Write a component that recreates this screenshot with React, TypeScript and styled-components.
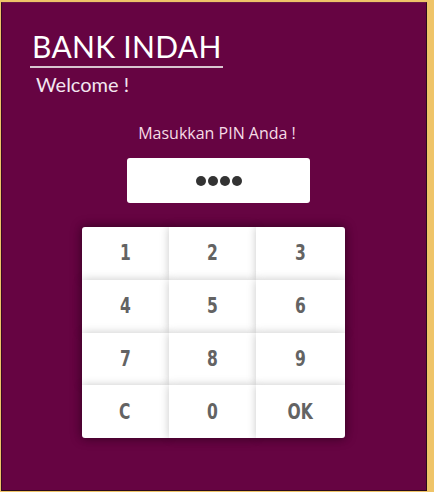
import React, { useState } from "react";
import styled, { createGlobalStyle } from "styled-components";

const Global = createGlobalStyle`
  html, body { margin: 0; padding: 0; background: #efc468; }
  * { box-sizing: border-box; }
`;

const Page = styled.div`
  padding: 2px 0 0 1px;
  width: 434px;
  height: 492px;
`;

const Panel = styled.div`
  width: 426px;
  height: 489px;
  background: #660442;
  border: 1px solid #2a0a1c;
  border-top-color: #6a1a48;
  border-left-color: #3a0a26;
  display: flex;
  flex-direction: column;
`;

const Header = styled.div`
  padding: 26px 0 0 28px;
  display: flex;
  flex-direction: column;
  align-items: flex-start;
`;

const Title = styled.h1`
  margin: 0;
  font-family: "Lato", "DejaVu Sans", sans-serif;
  font-weight: 400;
  font-size: 30px;
  line-height: 34px;
  letter-spacing: 0.3px;
  color: #ffffff;
  padding: 0 1px 3px 2px;
  border-bottom: 2px solid #d9c6d0;
`;

const Welcome = styled.div`
  margin: 4px 0 0 6px;
  font-family: "Lato", "DejaVu Sans", sans-serif;
  font-size: 20px;
  line-height: 24px;
  color: #f3e6f0;
`;

const Body = styled.div`
  display: flex;
  flex-direction: column;
  align-items: center;
  padding-top: 26px;
`;

const Prompt = styled.div`
  font-family: "Open Sans", "Noto Sans", sans-serif;
  font-size: 16px;
  line-height: 22px;
  color: #f6dbe6;
  margin-bottom: 14px;
  padding-left: 6px;
`;

const PinBox = styled.div`
  width: 183px;
  height: 45px;
  margin-left: 9px;
  background: #ffffff;
  border-radius: 3px;
  display: flex;
  align-items: center;
  justify-content: center;
  gap: 2px;
  padding-top: 1px;
`;

const Dot = styled.span`
  width: 10px;
  height: 10px;
  border-radius: 50%;
  background: #333333;
`;

const Keypad = styled.div`
  margin-top: 24px;
  margin-left: -2px;
  width: 263px;
  display: grid;
  grid-template-columns: 87px 87px 89px;
  grid-auto-rows: 52.75px;
  border-radius: 3px;
  box-shadow: 0 0 12px rgba(0, 0, 0, 0.35);
`;

const Key = styled.button<{ $corner?: string }>`
  border: none;
  margin: 0;
  padding: 0;
  background: #ffffff;
  color: #636363;
  font-family: "DejaVu Sans", sans-serif;
  font-weight: 700;
  font-size: 21px;
  display: flex;
  align-items: center;
  justify-content: center;
  box-shadow: 0 0 9px rgba(0, 0, 0, 0.22);
  border-radius: ${(p) =>
    p.$corner === "tl" ? "3px 0 0 0" : p.$corner === "tr" ? "0 3px 0 0" : p.$corner === "bl" ? "0 0 0 3px" : p.$corner === "br" ? "0 0 3px 0" : "0"};
  cursor: pointer;
`;

const KeyLabel = styled.span`
  display: inline-block;
  transform: scaleX(0.74);
`;

const keys = ["1", "2", "3", "4", "5", "6", "7", "8", "9", "C", "0", "OK"];
const corners: Record<number, string> = { 0: "tl", 2: "tr", 9: "bl", 11: "br" };

export default function App() {
  const [pin, setPin] = useState("1234");
  const press = (k: string) => {
    if (k === "C") setPin("");
    else if (k === "OK") return;
    else if (pin.length < 6) setPin(pin + k);
  };
  return (
    <Page>
      <Global />
      <Panel>
        <Header>
          <Title>BANK INDAH</Title>
          <Welcome>Welcome !</Welcome>
        </Header>
        <Body>
          <Prompt>Masukkan PIN Anda !</Prompt>
          <PinBox>
            {pin.split("").map((_, i) => (
              <Dot key={i} />
            ))}
          </PinBox>
          <Keypad>
            {keys.map((k, i) => (
              <Key key={k} $corner={corners[i]} onClick={() => press(k)}>
                <KeyLabel>{k}</KeyLabel>
              </Key>
            ))}
          </Keypad>
        </Body>
      </Panel>
    </Page>
  );
}
